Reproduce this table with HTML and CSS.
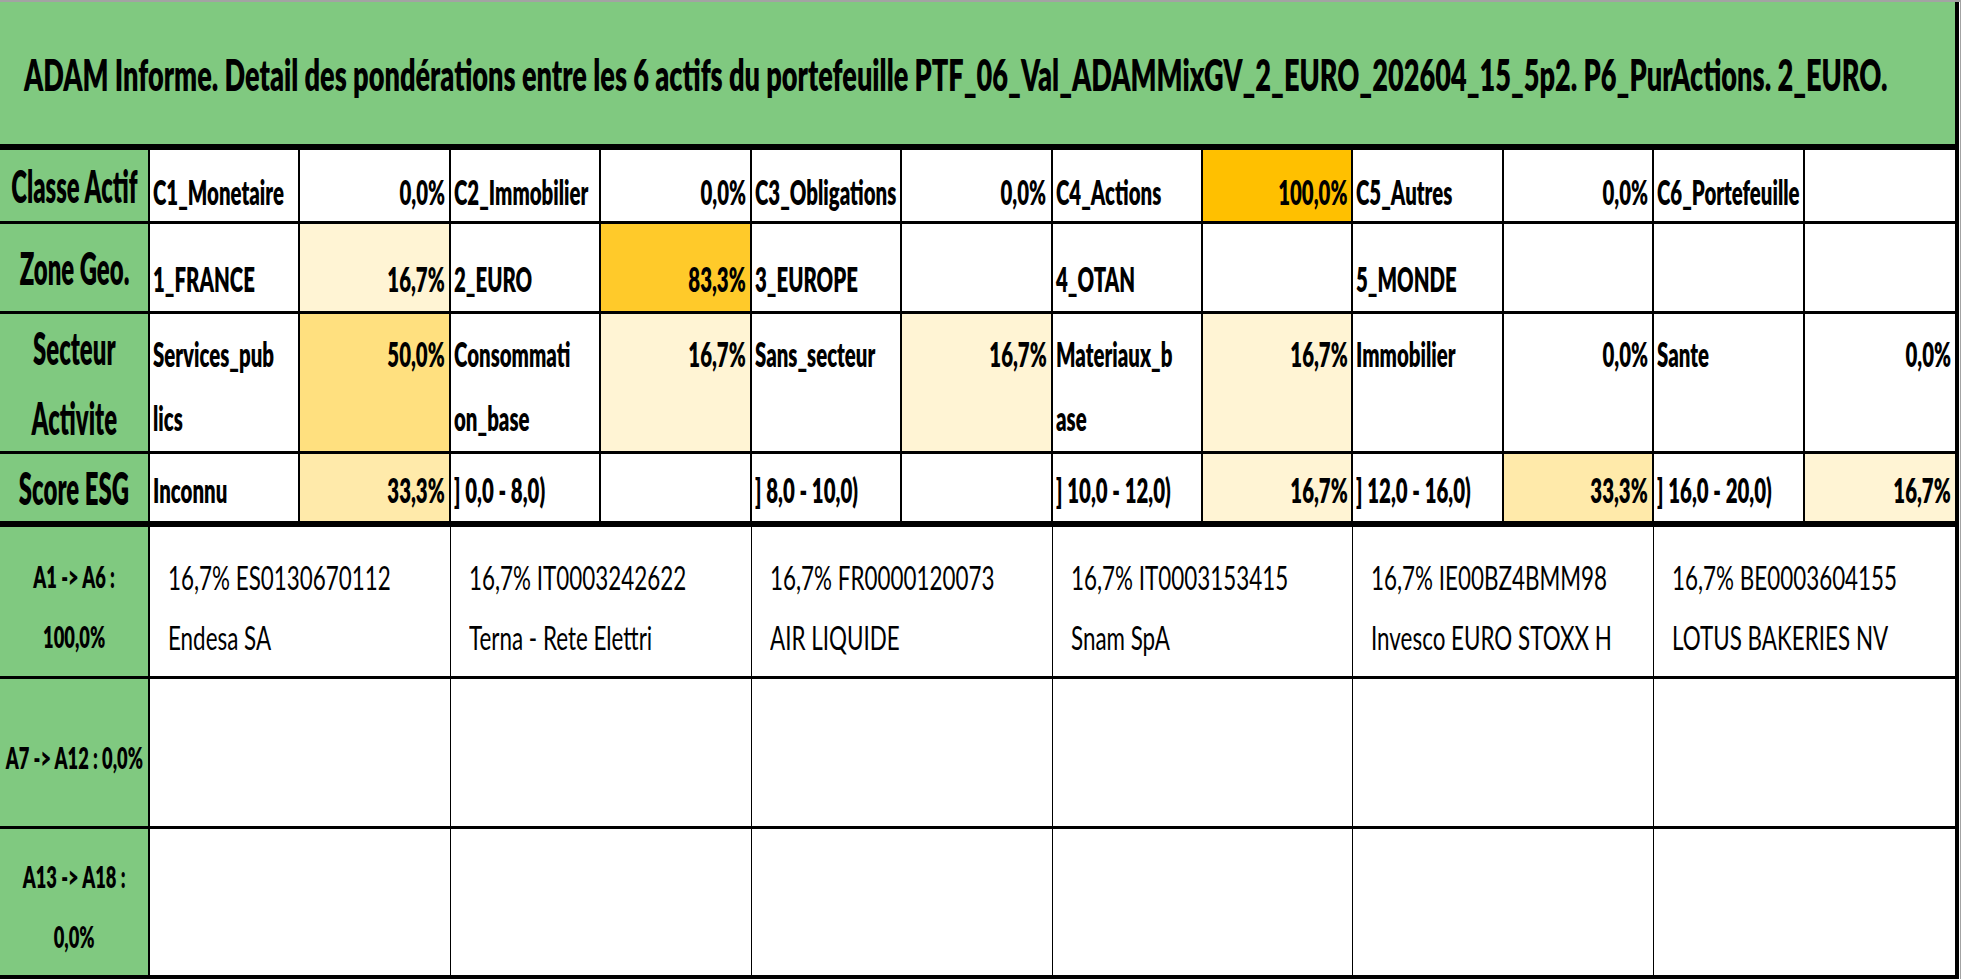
FILE: index.html
```html
<!DOCTYPE html>
<html lang="fr">
<head>
<meta charset="utf-8">
<title>ADAM Informe</title>
<link rel="stylesheet" href="styles.css">
</head>
<body>
<div class="frame">
  <div class="sheet">
    <div class="title"><span class="s">ADAM Informe. Detail des pondérations entre les 6 actifs du portefeuille PTF_06_Val_ADAMMixGV_2_EURO_202604_15_5p2. P6_PurActions. 2_EURO.</span></div>

    <div class="row r1 thick-top">
      <div class="lbl"><span class="s">Classe Actif</span></div>
      <div class="c"><span class="s">C1_Monetaire</span></div>
      <div class="c v"><span class="s">0,0%</span></div>
      <div class="c"><span class="s">C2_Immobilier</span></div>
      <div class="c v"><span class="s">0,0%</span></div>
      <div class="c"><span class="s">C3_Obligations</span></div>
      <div class="c v"><span class="s">0,0%</span></div>
      <div class="c"><span class="s">C4_Actions</span></div>
      <div class="c v h100"><span class="s">100,0%</span></div>
      <div class="c"><span class="s">C5_Autres</span></div>
      <div class="c v"><span class="s">0,0%</span></div>
      <div class="c"><span class="s">C6_Portefeuille</span></div>
      <div class="c v"></div>
    </div>

    <div class="row r2">
      <div class="lbl"><span class="s">Zone Geo.</span></div>
      <div class="c"><span class="s">1_FRANCE</span></div>
      <div class="c v h17"><span class="s">16,7%</span></div>
      <div class="c"><span class="s">2_EURO</span></div>
      <div class="c v h83"><span class="s">83,3%</span></div>
      <div class="c"><span class="s">3_EUROPE</span></div>
      <div class="c v"></div>
      <div class="c"><span class="s">4_OTAN</span></div>
      <div class="c v"></div>
      <div class="c"><span class="s">5_MONDE</span></div>
      <div class="c v"></div>
      <div class="c"></div>
      <div class="c v"></div>
    </div>

    <div class="row r3">
      <div class="lbl"><span class="s">Secteur<br>Activite</span></div>
      <div class="c"><span class="s">Services_pub<br>lics</span></div>
      <div class="c v h50"><span class="s">50,0%</span></div>
      <div class="c"><span class="s">Consommati<br>on_base</span></div>
      <div class="c v h17"><span class="s">16,7%</span></div>
      <div class="c"><span class="s">Sans_secteur</span></div>
      <div class="c v h17"><span class="s">16,7%</span></div>
      <div class="c"><span class="s">Materiaux_b<br>ase</span></div>
      <div class="c v h17"><span class="s">16,7%</span></div>
      <div class="c"><span class="s">Immobilier</span></div>
      <div class="c v"><span class="s">0,0%</span></div>
      <div class="c"><span class="s">Sante</span></div>
      <div class="c v"><span class="s">0,0%</span></div>
    </div>

    <div class="row r4">
      <div class="lbl"><span class="s">Score ESG</span></div>
      <div class="c"><span class="s">Inconnu</span></div>
      <div class="c v h33"><span class="s">33,3%</span></div>
      <div class="c"><span class="s">] 0,0 - 8,0)</span></div>
      <div class="c v"></div>
      <div class="c"><span class="s">] 8,0 - 10,0)</span></div>
      <div class="c v"></div>
      <div class="c"><span class="s">] 10,0 - 12,0)</span></div>
      <div class="c v h17"><span class="s">16,7%</span></div>
      <div class="c"><span class="s">] 12,0 - 16,0)</span></div>
      <div class="c v h33"><span class="s">33,3%</span></div>
      <div class="c"><span class="s">] 16,0 - 20,0)</span></div>
      <div class="c v h17"><span class="s">16,7%</span></div>
    </div>

    <div class="row low ra1 thick-top">
      <div class="lbl lbl-low"><span class="s">A1 -&gt; A6 :<br>100,0%</span></div>
      <div class="a"><span class="s">16,7% ES0130670112<br>Endesa SA</span></div>
      <div class="a"><span class="s">16,7% IT0003242622<br>Terna - Rete Elettri</span></div>
      <div class="a"><span class="s">16,7% FR0000120073<br>AIR LIQUIDE</span></div>
      <div class="a"><span class="s">16,7% IT0003153415<br>Snam SpA</span></div>
      <div class="a"><span class="s">16,7% IE00BZ4BMM98<br>Invesco EURO STOXX H</span></div>
      <div class="a"><span class="s">16,7% BE0003604155<br>LOTUS BAKERIES NV</span></div>
    </div>

    <div class="row low ra7">
      <div class="lbl lbl-low"><span class="s">A7 -&gt; A12 : 0,0%</span></div>
      <div class="a"></div>
      <div class="a"></div>
      <div class="a"></div>
      <div class="a"></div>
      <div class="a"></div>
      <div class="a"></div>
    </div>

    <div class="row low ra13">
      <div class="lbl lbl-low"><span class="s">A13 -&gt; A18 :<br>0,0%</span></div>
      <div class="a"></div>
      <div class="a"></div>
      <div class="a"></div>
      <div class="a"></div>
      <div class="a"></div>
      <div class="a"></div>
    </div>
  </div>
</div>
</body>
</html>
```

FILE: styles.css
```css
* { box-sizing: border-box; }

html, body {
  margin: 0;
  padding: 0;
  background: #ffffff;
  overflow: hidden;
}

body {
  font-family: Lato, "Open Sans", "Liberation Sans", sans-serif;
  color: #000;
}

.frame {
  width: 1961px;
  height: 979px;
  border-top: 2px solid #a3a3a3;
  border-right: 1px solid #a3a3a3;
  padding-right: 1px;
  overflow: hidden;
}

.sheet {
  border-right: 4px solid #000;
  border-bottom: 4px solid #000;
}

.s {
  display: inline-block;
  white-space: nowrap;
  transform-origin: left center;
  transform: scaleX(var(--sx, 0.6));
}

/* title */
.title {
  height: 142px;
  background: #80c980;
  padding: 48px 0 0 24px;
  font-weight: 800;
  font-size: 43px;
  line-height: 50px;
  white-space: nowrap;
  overflow: hidden;
  --sx: 0.631;
}

/* grid rows */
.row {
  display: grid;
  grid-template-columns: 150px repeat(12, minmax(0, 1fr));
  grid-template-rows: minmax(0, 1fr);
  border-bottom: 3px solid #000;
}

.row.thick-top { border-top: 6px solid #000; }
.row.r4 { border-bottom: 0; }
.row.ra13 { border-bottom: 0; }

.r1 { height: 80px; }
.r2 { height: 90px; }
.r3 { height: 140px; }
.r4 { height: 67px; }
.ra1 { height: 158px; }
.ra7 { height: 150px; }
.ra13 { height: 146px; }

.lbl {
  background: #80c980;
  border-right: 2px solid #000;
  display: flex;
  align-items: center;
  justify-content: center;
  text-align: center;
  overflow: hidden;
  font-weight: 800;
  font-size: 46px;
  line-height: 50px;
  --sx: 0.52;
}
.lbl .s { transform-origin: center center; }

.r3 .lbl { line-height: 70px; }

.c {
  border-right: 2px solid #000;
  display: flex;
  align-items: flex-end;
  padding: 0 4px 11px 3px;
  overflow: hidden;
  font-weight: 800;
  font-size: 34px;
  line-height: 40px;
  background: #ffffff;
  --sx: 0.6;
}
.c:last-child { border-right: 0; }
.c.v { justify-content: flex-end; }
.c.v .s { transform-origin: right center; }

.r1 .c { padding-bottom: 9px; }
.r2 .c { padding-bottom: 12px; }

.r3 .c {
  align-items: flex-start;
  padding-top: 8px;
  padding-bottom: 0;
  line-height: 64px;
}

/* heat colours (white -> #FFC000) */
.h17 { background: #fff4d4; }
.h33 { background: #ffeaaa; }
.h50 { background: #ffe07f; }
.h83 { background: #ffca2a; }
.h100 { background: #ffc000; }

/* lower asset rows */
.row.low {
  grid-template-columns: 150px repeat(6, minmax(0, 1fr));
}

.lbl-low {
  font-size: 31px;
  line-height: 60px;
  padding-top: 8px;
  --sx: 0.59;
}

.a {
  border-right: 1px solid #000;
  padding: 21px 4px 0 18px;
  overflow: hidden;
  font-weight: 400;
  font-size: 32px;
  line-height: 60px;
  --sx: 0.70;
}
.a:last-child { border-right: 0; }
```
